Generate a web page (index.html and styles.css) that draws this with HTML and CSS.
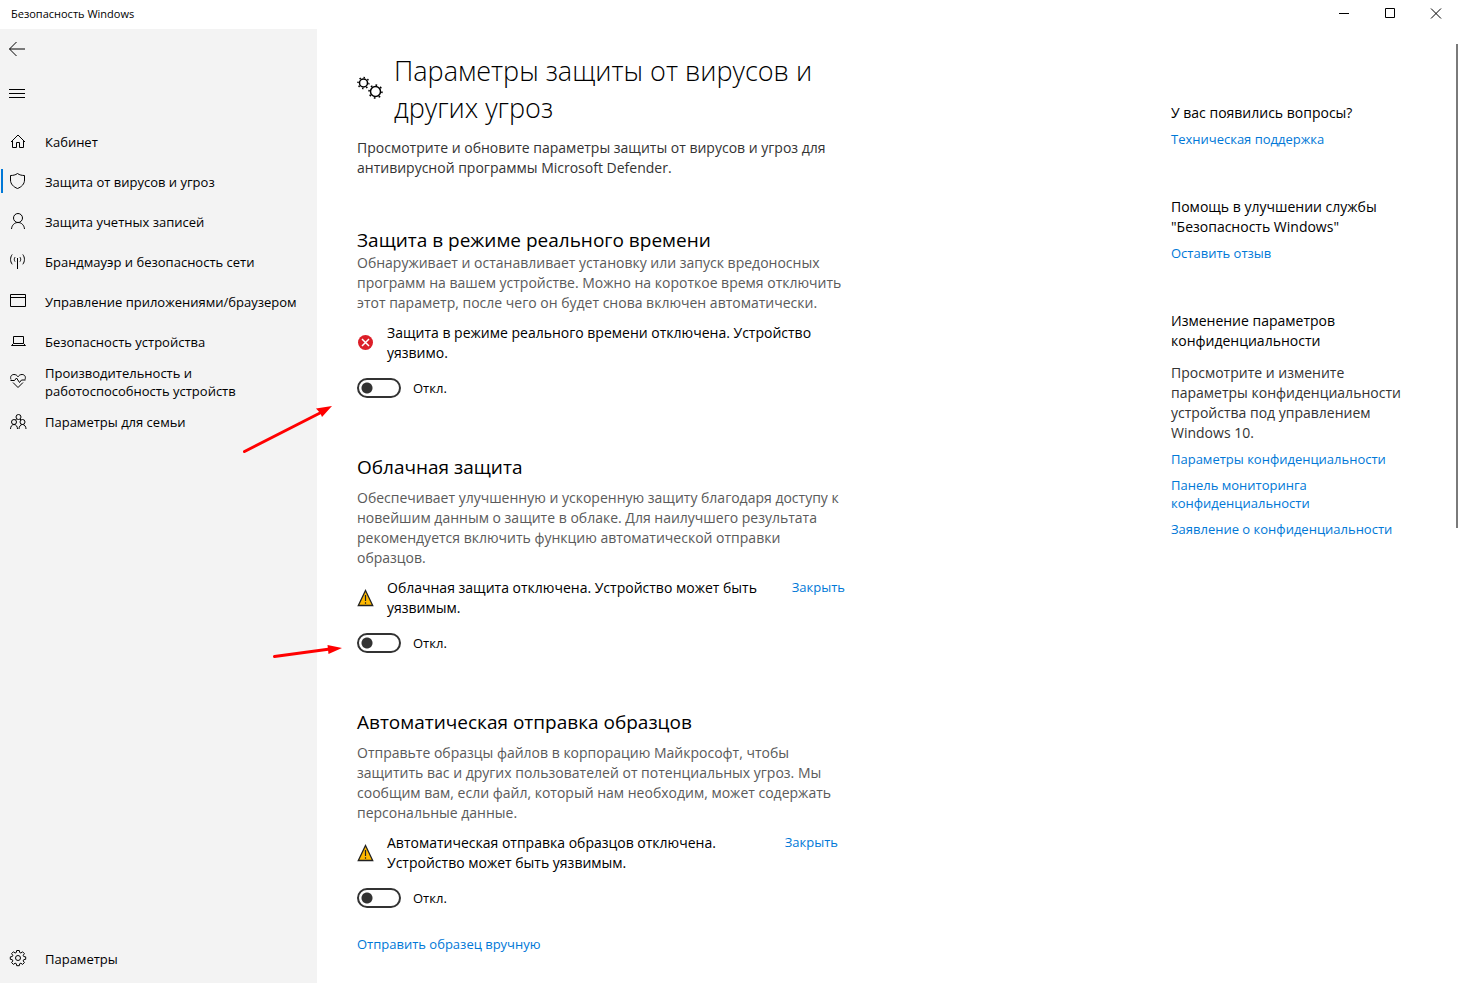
FILE: index.html
```html
<!DOCTYPE html>
<html lang="ru">
<head>
  <meta charset="UTF-8" />
  <meta name="viewport" content="width=device-width, initial-scale=1.0"/>
  <title>Безопасность Windows</title>
  <link rel="stylesheet" href="styles.css">
</head>
<body>
  <header class="titlebar">
    <span class="title">Безопасность Windows</span>
    <div class="window-buttons">
      <button type="button" aria-label="Свернуть">
        <svg width="12" height="12" viewBox="0 0 12 12"><path d="M1 5.500h10"/></svg>
      </button>
      <button type="button" aria-label="Развернуть">
        <svg width="12" height="12" viewBox="0 0 12 12"><path d="M1.500.5h9v9h-9z"/></svg>
      </button>
      <button type="button" aria-label="Закрыть окно">
        <svg width="12" height="12" viewBox="0 0 12 12"><path d="M1 .5l10 10M11 .5l-10 10"/></svg>
      </button>
    </div>
  </header>

  <div class="window">
    <!-- Sidebar -->
    <nav class="sidebar">
      <button type="button" class="icon-btn back" aria-label="Назад">
        <svg width="18" height="18" viewBox="0 0 18 18"><path d="M17 9H1.500M8.500 2L1.500 9l7 7"/></svg>
      </button>
      <button type="button" class="icon-btn" aria-label="Меню">
        <svg width="18" height="18" viewBox="0 0 18 18"><path d="M1 5.500h16M1 9.500h16M1 13.500h16"/></svg>
      </button>

      <ul class="menu">
        <li><a href="#">
          <svg width="18" height="18" viewBox="0 0 18 18"><path d="M2 9L9 2l7 7M3.500 7.500v7h4v-5h3v5h4v-7"/></svg>
          <span>Кабинет</span>
        </a></li>
        <li><a href="#" class="active">
          <svg width="18" height="18" viewBox="0 0 18 18"><path d="M8.500.5C6.500 2 4 2.500 1.500 2.500V7c0 4 3 7 7 8.500 4-1.500 7-4.500 7-8.500V2.500c-2.500 0-5-.5-7-2z"/></svg>
          <span>Защита от вирусов и угроз</span>
        </a></li>
        <li><a href="#">
          <svg width="18" height="18" viewBox="0 0 18 18"><circle cx="9" cy="5" r="4.500"/><path d="M2.500 16c.3-3.800 3-6.500 6.500-6.500s6.200 2.700 6.500 6.500"/></svg>
          <span>Защита учетных записей</span>
        </a></li>
        <li><a href="#">
          <svg width="18" height="18" viewBox="0 0 18 18"><path d="M8.500 5v11M6 4.200c-.9 1.400-.9 3 0 4.400M11 4.200c.9 1.400.9 3 0 4.400M3.200 1.500c-2.200 3-2.200 6.800 0 9.800M13.800 1.500c2.200 3 2.200 6.800 0 9.800"/></svg>
          <span>Брандмауэр и безопасность сети</span>
        </a></li>
        <li><a href="#">
          <svg width="18" height="18" viewBox="0 0 18 18"><path d="M1.500 1.500h15v12h-15zM1.500 4.500h15"/></svg>
          <span>Управление приложениями/браузером</span>
        </a></li>
        <li><a href="#">
          <svg width="18" height="18" viewBox="0 0 18 18"><path d="M4.500 3.500h10v7h-10zM4.500 10.500l-2 2h14l-2-2"/></svg>
          <span>Безопасность устройства</span>
        </a></li>
        <li><a href="#">
          <svg width="18" height="18" viewBox="0 0 18 18"><path d="M2 6.500C.8 3.500 2.500 1.500 5 1.500c1.800 0 3 .8 4 2.300 1-1.500 2.200-2.300 4-2.300 2.500 0 4.200 2 3 5M1.500 7.500h4L7.500 5l3 4.500 2-2.500h4M4 9.500l5 5 5-5"/></svg>
          <span>Производительность и<br>работоспособность устройств</span>
        </a></li>
        <li><a href="#">
          <svg width="18" height="18" viewBox="0 0 18 18"><circle cx="9.500" cy="4" r="2.500"/><circle cx="5" cy="9" r="2.500"/><circle cx="13.500" cy="9" r="2.500"/><path d="M1.500 16c0-2.500 1.500-4.500 3.500-4.500S8.500 13.500 8.500 16M10 16c0-2.500 1.500-4.500 3.500-4.500s3.500 2 3.500 4.500M6.500 7l1-1M12 7l-1-1"/></svg>
          <span>Параметры для семьи</span>
        </a></li>
      </ul>

      <a href="#" class="settings">
        <svg width="18" height="18" viewBox="0 0 18 18"><circle cx="9" cy="8" r="2.500"/><path d="M7.700.5h2.600l.4 2 1.200.5 1.700-1.200 1.800 1.800L14.200 5.300l.5 1.200 2 .4v2.400l-2 .4-.5 1.200 1.200 1.700-1.800 1.800-1.700-1.200-1.200.5-.4 2H7.700l-.4-2-1.200-.5-1.700 1.200-1.800-1.800 1.200-1.700-.5-1.200-2-.4V6.900l2-.4.5-1.200-1.200-1.700 1.800-1.800L6.100 3l1.200-.5z"/></svg>
        <span>Параметры</span>
      </a>
    </nav>

    <!-- Content -->
    <main class="content">
      <div class="page-head">
        <svg width="26" height="26" viewBox="0 0 26 26">
          <circle cx="6.500" cy="7" r="4"/>
          <circle class="teeth" cx="6.500" cy="7" r="5.500" pathLength="32"/>
          <circle cx="18.500" cy="15.500" r="5"/>
          <circle class="teeth" cx="18.500" cy="15.500" r="6.500" pathLength="32"/>
        </svg>
        <h1>Параметры защиты от вирусов и<br>других угроз</h1>
      </div>
      <p class="intro">Просмотрите и обновите параметры защиты от вирусов и угроз для<br>антивирусной программы Microsoft Defender.</p>

      <section class="option realtime">
        <h2>Защита в режиме реального времени</h2>
        <p class="description">Обнаруживает и останавливает установку или запуск вредоносных<br>программ на вашем устройстве. Можно на короткое время отключить<br>этот параметр, после чего он будет снова включен автоматически.</p>
        <div class="status">
          <svg width="18" height="18" viewBox="0 0 18 18"><circle cx="8.500" cy="8.500" r="7.500" fill="#dc1e28" stroke="none"/><path d="M5 5l7 7M12 5l-7 7" stroke="#fff" stroke-width="1.500"/></svg>
          <p>Защита в режиме реального времени отключена. Устройство<br>уязвимо.</p>
        </div>
        <div class="toggle">
          <input type="checkbox" role="switch" id="realtime">
          <label for="realtime">Откл.</label>
        </div>
      </section>

      <section class="option">
        <h2>Облачная защита</h2>
        <p class="description">Обеспечивает улучшенную и ускоренную защиту благодаря доступу к<br>новейшим данным о защите в облаке. Для наилучшего результата<br>рекомендуется включить функцию автоматической отправки<br>образцов.</p>
        <div class="status">
          <svg width="18" height="18" viewBox="0 0 18 18"><path d="M8.500 1.500l7.200 15H1.300z" fill="#ffb900" stroke="#222" stroke-width="1.300"/><path d="M8.500 6v6M8.500 13.200v1.500" stroke="#222" stroke-width="1.200"/></svg>
          <p>Облачная защита отключена. Устройство может быть<br>уязвимым.</p>
          <a href="#" class="dismiss">Закрыть</a>
        </div>
        <div class="toggle">
          <input type="checkbox" role="switch" id="cloud">
          <label for="cloud">Откл.</label>
        </div>
      </section>

      <section class="option samples">
        <h2>Автоматическая отправка образцов</h2>
        <p class="description">Отправьте образцы файлов в корпорацию Майкрософт, чтобы<br>защитить вас и других пользователей от потенциальных угроз. Мы<br>сообщим вам, если файл, который нам необходим, может содержать<br>персональные данные.</p>
        <div class="status">
          <svg width="18" height="18" viewBox="0 0 18 18"><path d="M8.500 1.500l7.200 15H1.300z" fill="#ffb900" stroke="#222" stroke-width="1.300"/><path d="M8.500 6v6M8.500 13.200v1.500" stroke="#222" stroke-width="1.200"/></svg>
          <p>Автоматическая отправка образцов отключена.<br>Устройство может быть уязвимым.</p>
          <a href="#" class="dismiss">Закрыть</a>
        </div>
        <div class="toggle">
          <input type="checkbox" role="switch" id="samples">
          <label for="samples">Откл.</label>
        </div>
        <a href="#" class="manual">Отправить образец вручную</a>
      </section>
    </main>

    <!-- Help column -->
    <aside class="help">
      <section>
        <h3>У вас появились вопросы?</h3>
        <a href="#">Техническая поддержка</a>
      </section>
      <section>
        <h3>Помощь в улучшении службы<br>"Безопасность Windows"</h3>
        <a href="#">Оставить отзыв</a>
      </section>
      <section>
        <h3>Изменение параметров<br>конфиденциальности</h3>
        <p>Просмотрите и измените<br>параметры конфиденциальности<br>устройства под управлением<br>Windows 10.</p>
        <a href="#">Параметры конфиденциальности</a>
        <a href="#">Панель мониторинга<br>конфиденциальности</a>
        <a href="#">Заявление о конфиденциальности</a>
      </section>
    </aside>

    <div class="scroll-thumb"></div>

    <!-- Arrows pointing at the switches -->
    <svg class="arrow arrow-realtime" width="92" height="52" viewBox="0 0 92 52"><path d="M2.500 47.500L78 9"/><path class="tip" d="M90 2L80 13 78.500 9.500 74 4.500z"/></svg>
    <svg class="arrow arrow-cloud" width="72" height="16" viewBox="0 0 72 16"><path d="M2.500 12.500L58 5"/><path class="tip" d="M70 4L56.500 10 55.500 1z"/></svg>
  </div>
</body>
</html>
```
FILE: styles.css
```css
* {
  margin: 0;
  padding: 0;
  box-sizing: border-box;
}

body {
  min-height: 100vh;
  display: flex;
  flex-direction: column;
  background: #fff;
  color: #000;
  font-family: 'Segoe UI', 'Open Sans', 'Noto Sans', sans-serif;
  font-size: 14px;
  line-height: 20px;
}

svg {
  flex: none;
  fill: none;
  stroke: #000;
}

button {
  border: none;
  background: transparent;
  cursor: pointer;
}

a {
  color: #0078d7;
  font-size: 13px;
  line-height: 18px;
  text-decoration: none;
}

h1, h2, h3 {
  font-weight: 400;
}

.titlebar {
  height: 29px;
  display: flex;
  justify-content: space-between;
  padding-left: 11px;
}

.title {
  font-size: 11px;
  line-height: 28px;
}

.window-buttons {
  display: flex;
}

.window-buttons button {
  width: 46px;
  height: 28px;
  display: flex;
  align-items: center;
  justify-content: center;
}

.window {
  flex: 1;
  display: flex;
  position: relative;
}

/* Sidebar */
.sidebar {
  width: 317px;
  flex: none;
  display: flex;
  flex-direction: column;
  padding-bottom: 4px;
  background: #f3f3f3;
}

.icon-btn {
  width: 48px;
  height: 40px;
  display: flex;
  align-items: center;
  padding-left: 8px;
}

.icon-btn.back {
  margin-bottom: 4px;
}

.menu {
  list-style: none;
  margin: 9px 0 auto;
}

.menu a,
.settings {
  height: 40px;
  display: flex;
  align-items: center;
  gap: 18px;
  padding-left: 9px;
  color: #000;
  white-space: nowrap;
  position: relative;
}

.menu a.active::before {
  content: "";
  position: absolute;
  left: 1px;
  top: 7px;
  width: 2px;
  height: 24px;
  background: #0078d7;
}

/* Content */
.content {
  flex: 1;
  padding: 23px 40px 28px;
  white-space: nowrap;
}

.page-head {
  display: flex;
  align-items: center;
  gap: 11px;
  margin-bottom: 12px;
}

.page-head svg {
  stroke-width: 1.5;
}

.teeth {
  stroke-dasharray: 1.4 2.6;
}

h1 {
  font-size: 27px;
  font-weight: 300;
  line-height: 37px;
}

.intro {
  margin-bottom: 50px;
  color: #333;
}

.option {
  width: 492px;
  margin-bottom: 57px;
}

.option h2 {
  margin-bottom: 9px;
  font-size: 19px;
  line-height: 24px;
}

.realtime h2 {
  margin-bottom: 1px;
}

.description {
  margin-bottom: 10px;
  color: #5a5a5a;
}

.status {
  display: flex;
  align-items: center;
  gap: 12px;
  margin-bottom: 15px;
}

.dismiss {
  align-self: flex-start;
  margin-left: auto;
  margin-right: 4px;
}

.samples .dismiss {
  margin-right: 11px;
}

.toggle {
  display: flex;
  align-items: center;
  gap: 12px;
  font-size: 13px;
}

.toggle input {
  appearance: none;
  width: 44px;
  height: 20px;
  border: 2px solid #333;
  border-radius: 10px;
  background: radial-gradient(circle at 8px 8px, #333 5px, transparent 6px);
}

.toggle input:checked {
  border-color: #0078d7;
  background: radial-gradient(circle at 32px 8px, #fff 5px, #0078d7 6px);
}

.samples {
  margin-bottom: 0;
}

.manual {
  display: block;
  margin-top: 27px;
}

/* Help column */
.help {
  width: 288px;
  flex: none;
  padding-top: 74px;
  white-space: nowrap;
}

.help section {
  margin-bottom: 49px;
}

.help h3 {
  font-size: 14px;
}

.help p {
  margin-top: 12px;
  color: #333;
}

.help a {
  display: block;
  margin-top: 7px;
}

.help a + a {
  margin-top: 8px;
}

.scroll-thumb {
  position: absolute;
  top: 15px;
  right: 1px;
  width: 2px;
  height: 484px;
  background: #7a7a7a;
}

.arrow {
  position: absolute;
  stroke: #f00;
  stroke-width: 3;
  stroke-linecap: round;
}

.arrow .tip {
  fill: #f00;
  stroke: none;
}

.arrow-realtime {
  left: 242px;
  top: 375px;
}

.arrow-cloud {
  left: 272px;
  top: 615px;
}
```
